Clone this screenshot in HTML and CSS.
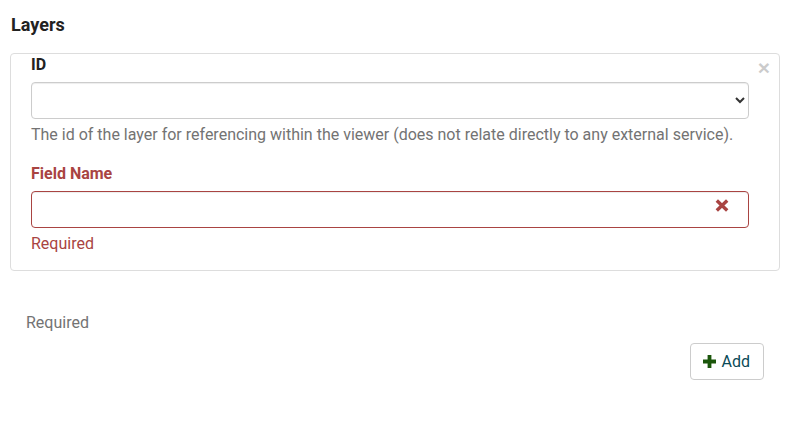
FILE: index.html
```html
<!DOCTYPE html>
<html>
<head>
<meta charset="utf-8">
<link rel="stylesheet" href="styles.css">
</head>
<body>
<div class="page">
  <h3 class="title">Layers</h3>
  <div class="card">
    <button class="close" type="button">×</button>
    <div class="form-group">
      <label class="label">ID</label>
      <select class="control"></select>
      <p class="help">The id of the layer for referencing within the viewer (does not relate directly to any external service).</p>
    </div>
    <div class="form-group error">
      <label class="label">Field Name</label>
      <div class="input-wrap">
        <input class="control" type="text">
        <svg class="feedback" width="14" height="13" viewBox="0 0 14 13"><path d="M1.8 1.5 L12.2 11.5 M12.2 1.5 L1.8 11.5" stroke="#a94442" stroke-width="3.4"/></svg>
      </div>
      <p class="help">Required</p>
    </div>
  </div>
  <p class="required">Required</p>
  <div class="actions">
    <button class="btn" type="button"><svg class="plus" width="13" height="13" viewBox="0 0 13 13"><path d="M6.5 0 V13 M0 6.5 H13" stroke="#1b560b" stroke-width="3.8"/></svg>Add</button>
  </div>
</div>
</body>
</html>
```

FILE: styles.css
```css
* { box-sizing: border-box; }
body {
  margin: 0;
  font-family: Roboto, "Noto Sans", sans-serif;
  font-size: 16px;
  line-height: 1.42857;
  color: #333;
  background: #fff;
}
.page {
  padding: 0 18px 0 10px;
}
.title {
  margin: 0;
  padding: 13px 0 0 1px;
  font-size: 18px;
  font-weight: 700;
  line-height: 24px;
  color: #222;
  height: 53px;
}
.card {
  position: relative;
  border: 1px solid #ddd;
  border-radius: 4px;
  padding: 0 30px 0 20px;
}
.close {
  position: absolute;
  top: 3px;
  right: 9px;
  border: 0;
  background: none;
  padding: 0;
  font-family: "Liberation Sans", Arial, sans-serif;
  font-size: 21px;
  font-weight: 700;
  line-height: 21px;
  color: #000;
  opacity: 0.2;
}
.form-group {
  margin-bottom: 15px;
}
.label {
  display: block;
  font-weight: 700;
  margin-bottom: 5px;
  color: #222;
}
.error .label {
  padding-top: 1px;
}
.control {
  display: block;
  width: 100%;
  height: 37px;
  border: 1px solid #ccc;
  border-radius: 4px;
  background: #fff;
  font-family: inherit;
  font-size: 16px;
  padding: 6px 12px;
  box-shadow: inset 0 1px 1px rgba(0,0,0,.075);
}
select.control {
  padding: 6px 8px 6px 12px;
  color: #333;
}
.help {
  margin: 5px 0 10px;
  color: #737373;
}
.error .label { color: #a94442; }
.error .control { border-color: #a94442; }
.error .help { color: #a94442; }
.input-wrap {
  position: relative;
}
.feedback {
  position: absolute;
  right: 20px;
  top: 8px;
}
.required {
  margin: 41px 0 0 16px;
  color: #737373;
}
.actions {
  display: flex;
  justify-content: flex-end;
  margin: 8px 16px 0 0;
}
.btn {
  display: inline-flex;
  align-items: center;
  gap: 6px;
  height: 37px;
  padding: 0 13px 0 12px;
  border: 1px solid #ccc;
  border-radius: 4px;
  background: #fff;
  font-family: inherit;
  font-size: 16px;
  color: #0a4a57;
}
.plus { display: block; }
```
